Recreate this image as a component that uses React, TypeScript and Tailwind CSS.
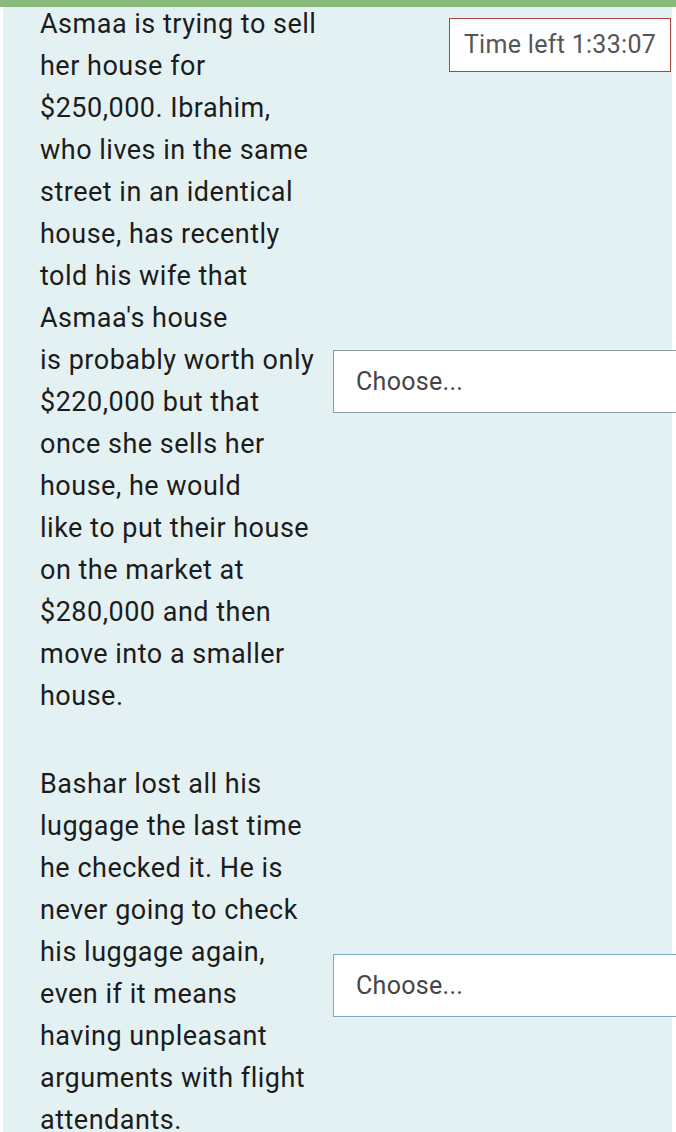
import React from "react";

const first = [
  "Asmaa is trying to sell",
  "her house for",
  "$250,000. Ibrahim,",
  "who lives in the same",
  "street in an identical",
  "house, has recently",
  "told his wife that",
  "Asmaa's house",
  "is probably worth only",
  "$220,000 but that",
  "once she sells her",
  "house, he would",
  "like to put their house",
  "on the market at",
  "$280,000 and then",
  "move into a smaller",
  "house.",
];

const second = [
  "Bashar lost all his",
  "luggage the last time",
  "he checked it. He is",
  "never going to check",
  "his luggage again,",
  "even if it means",
  "having unpleasant",
  "arguments with flight",
  "attendants.",
];

function Lines({ lines }: { lines: string[] }) {
  return (
    <p className="text-[27px] leading-[42px] tracking-[0.5px] text-[#1c1c1c]">
      {lines.map((line, i) => (
        <span key={i} className="block whitespace-nowrap">
          {line}
        </span>
      ))}
    </p>
  );
}

function ChooseBox({ border }: { border: string }) {
  return (
    <div
      className={`flex h-[63px] w-[380px] items-center border bg-white pl-[22px] text-[25px] tracking-[0.3px] text-[#454545] ${border}`}
    >
      Choose...
    </div>
  );
}

export default function App() {
  return (
    <div
      className="relative h-[1132px] w-[676px] overflow-hidden bg-white"
      style={{ fontFamily: "Roboto, 'Liberation Sans', sans-serif" }}
    >
      <div className="absolute left-0 right-0 top-0 z-10 h-[7px] bg-[#8ab97c]" />

      <div className="absolute left-[449px] top-[18px] z-10 flex h-[54px] w-[222px] items-center justify-center border border-[#a4493d] bg-white text-[25px] tracking-[0.3px] text-[#555]">
        Time left 1:33:07
      </div>

      <div className="ml-[3px] mr-[4px] h-full bg-[#e4f1f3] pl-[37px] pt-[3px]">
        <div className="flex">
          <div className="w-[293px] shrink-0 pb-[46px]">
            <Lines lines={first} />
          </div>
          <div className="pt-[347px]">
            <ChooseBox border="border-[#8c9ca1]" />
          </div>
        </div>
        <div className="flex">
          <div className="w-[293px] shrink-0">
            <Lines lines={second} />
          </div>
          <div className="pt-[191px]">
            <ChooseBox border="border-[#80abba]" />
          </div>
        </div>
      </div>
    </div>
  );
}
